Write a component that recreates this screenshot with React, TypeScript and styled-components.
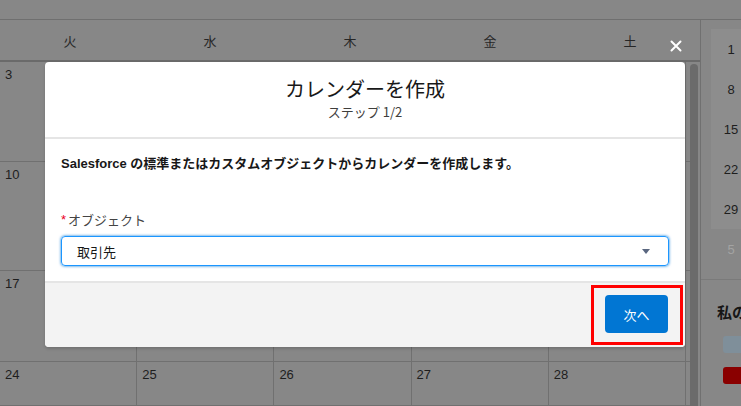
import React from 'react'
import styled, { createGlobalStyle } from 'styled-components'

const GlobalStyle = createGlobalStyle`
  html, body {
    margin: 0;
    padding: 0;
    width: 741px;
    height: 406px;
    overflow: hidden;
    background: #878787;
  }
  * {
    box-sizing: border-box;
  }
`

const Page = styled.div`
  position: relative;
  width: 741px;
  height: 406px;
  overflow: hidden;
  background: #878787;
  color: #1e1e1e;
  font-family: 'Liberation Sans', Arial, 'Noto Sans CJK JP', sans-serif;
  font-size: 13px;
`

const TopBar = styled.div`
  height: 20px;
  border-bottom: 1px solid #6f6f6f;
`

const Main = styled.div`
  display: flex;
  height: 386px;
`

const CalendarPane = styled.div`
  width: 701px;
  border-right: 1px solid #707070;
  display: flex;
  flex-direction: column;
`

const WeekHeader = styled.div`
  display: grid;
  grid-template-columns: repeat(5, 140px);
  height: 42px;
  border-bottom: 2px solid #6a6a6a;
`

const DayName = styled.div`
  display: flex;
  align-items: center;
  justify-content: center;
  color: #262626;
  font-family: 'Noto Sans CJK JP', sans-serif;
  font-size: 13px;
`

const CalendarBody = styled.div`
  flex: 1;
  display: flex;
  min-height: 0;
`

const Grid = styled.div`
  width: 689px;
  display: grid;
  grid-template-columns: repeat(5, 137.2px) 1fr;
  grid-template-rows: 100px 109px 91px 1fr;
`

const DayCell = styled.div<{ $last?: boolean }>`
  border-right: ${(p) => (p.$last ? 'none' : '1px solid #707070')};
  border-bottom: 1px solid #707070;
  padding: 4px 5px;
  line-height: 18px;
  font-size: 13px;
  color: #1e1e1e;
`

const ScrollTrack = styled.div`
  width: 11px;
  padding: 2px 2px 0 1px;
`

const ScrollThumb = styled.div`
  height: 100%;
  border-radius: 5px 5px 0 0;
  background: #6b6b6b;
`

const Sidebar = styled.div`
  flex: 1;
  padding-top: 9px;
  display: flex;
  flex-direction: column;
  overflow: hidden;
`

const MiniMonth = styled.div`
  margin-left: 10px;
  width: 60px;
  background: #8d8d8d;
`

const MiniDay = styled.div<{ $muted?: boolean }>`
  width: 40px;
  height: 40px;
  display: flex;
  align-items: center;
  justify-content: center;
  color: ${(p) => (p.$muted ? '#a3a3a3' : '#1e1e1e')};
  font-size: 13px;
`

const MutedRow = styled.div`
  margin-left: 10px;
`

const SideSection = styled.div`
  margin-top: 10px;
  border-top: 1px solid #7a7a7a;
  padding: 22px 0 0 16px;
`

const SideTitle = styled.div`
  font-family: 'Noto Sans CJK JP', sans-serif;
  font-weight: 700;
  font-size: 15px;
  line-height: 20px;
  white-space: nowrap;
  color: #161616;
`

const Swatch = styled.div<{ $color: string }>`
  margin: 14px 0 0 6px;
  width: 40px;
  height: 17px;
  border-radius: 3px;
  background: ${(p) => p.$color};
`

const Modal = styled.div`
  position: absolute;
  left: 45px;
  top: 62px;
  width: 640px;
  height: 285px;
  display: flex;
  flex-direction: column;
  border-radius: 4px;
  background: #fff;
  box-shadow: 0 2px 3px rgba(0, 0, 0, 0.16);
`

const CloseButton = styled.button`
  position: absolute;
  top: -25px;
  right: 0;
  width: 18px;
  height: 18px;
  padding: 0;
  border: none;
  background: transparent;
  display: flex;
  align-items: center;
  justify-content: center;
`

const ModalHeader = styled.div`
  height: 77px;
  padding-top: 15px;
  border-bottom: 2px solid #e5e5e5;
  text-align: center;
`

const Title = styled.h2`
  margin: 0;
  font-family: 'Noto Sans CJK JP', sans-serif;
  font-weight: 400;
  font-size: 20px;
  line-height: 24px;
  color: #181818;
`

const Subtitle = styled.div`
  margin-top: 2px;
  font-family: 'Noto Sans CJK JP', sans-serif;
  font-size: 13px;
  line-height: 18px;
  color: #3e3e3c;
`

const ModalBody = styled.div`
  height: 142px;
  padding: 16px 16px 0;
`

const Lead = styled.p`
  margin: 0;
  font-weight: 700;
  font-size: 13px;
  line-height: 18px;
  color: #181818;
`

const FieldLabel = styled.label`
  display: flex;
  align-items: center;
  margin-top: 38px;
  font-family: 'Noto Sans CJK JP', sans-serif;
  font-size: 13px;
  line-height: 18px;
  color: #444444;
`

const Required = styled.span`
  color: #ea001e;
  font-family: 'Liberation Sans', sans-serif;
  margin-right: 2px;
`

const SelectBox = styled.div`
  margin-top: 7px;
  height: 30px;
  display: flex;
  align-items: center;
  justify-content: space-between;
  padding: 0 16px 0 15px;
  border: 1px solid #1b96ff;
  border-radius: 4px;
  box-shadow: 0 0 3px #0176d3;
  font-family: 'Noto Sans CJK JP', sans-serif;
  font-size: 13px;
  color: #181818;
`

const Caret = styled.span`
  width: 0;
  height: 0;
  border-left: 4px solid transparent;
  border-right: 4px solid transparent;
  border-top: 5px solid #5a6780;
  margin-right: 2px;
`

const ModalFooter = styled.div`
  flex: 1;
  display: flex;
  justify-content: flex-end;
  align-items: flex-start;
  padding: 2px 2px 0 0;
  background: #f3f3f3;
  border-top: 2px solid #e5e5e5;
  border-radius: 0 0 4px 4px;
`

const Highlight = styled.div`
  border: 3px solid #ff0000;
  padding: 7px 12px 9px 11px;
`

const PrimaryButton = styled.button`
  width: 63px;
  height: 38px;
  border: none;
  border-radius: 4px;
  background: #0176d3;
  color: #fff;
  font-family: 'Noto Sans CJK JP', sans-serif;
  font-size: 13px;
`

const headers = ['火', '水', '木', '金', '土']

const rows = [
  ['3', '', '', '', '', ''],
  ['10', '', '', '', '', ''],
  ['17', '', '', '', '', ''],
  ['24', '25', '26', '27', '28', ''],
]

const App = () => {
  return (
    <Page>
      <GlobalStyle />
      <TopBar />
      <Main>
        <CalendarPane>
          <WeekHeader>
            {headers.map((h) => (
              <DayName key={h}>{h}</DayName>
            ))}
          </WeekHeader>
          <CalendarBody>
            <Grid>
              {rows.map((row, r) =>
                row.map((d, c) => (
                  <DayCell key={`${r}-${c}`} $last={c === 5}>
                    {d}
                  </DayCell>
                )),
              )}
            </Grid>
            <ScrollTrack>
              <ScrollThumb />
            </ScrollTrack>
          </CalendarBody>
        </CalendarPane>

        {/* right side panel */}
        <Sidebar>
          <MiniMonth>
            {['1', '8', '15', '22', '29'].map((d) => (
              <MiniDay key={d}>{d}</MiniDay>
            ))}
          </MiniMonth>
          <MutedRow>
            <MiniDay $muted>5</MiniDay>
          </MutedRow>
          <SideSection>
            <SideTitle>私のカレンダー</SideTitle>
            <Swatch $color="#7f8f9a" />
            <Swatch $color="#8a0000" />
          </SideSection>
        </Sidebar>
      </Main>

      {/* dialog */}
      <Modal>
        <CloseButton aria-label="閉じる">
          <svg width="12" height="12" viewBox="0 0 12 12">
            <path d="M1.5 1.5 L10.5 10.5 M10.5 1.5 L1.5 10.5" stroke="#fff" strokeWidth="2" strokeLinecap="round" />
          </svg>
        </CloseButton>
        <ModalHeader>
          <Title>カレンダーを作成</Title>
          <Subtitle>ステップ 1/2</Subtitle>
        </ModalHeader>
        <ModalBody>
          <Lead>Salesforce の標準またはカスタムオブジェクトからカレンダーを作成します。</Lead>
          <FieldLabel>
            <Required>*</Required>オブジェクト
          </FieldLabel>
          <SelectBox>
            <span>取引先</span>
            <Caret />
          </SelectBox>
        </ModalBody>
        <ModalFooter>
          <Highlight>
            <PrimaryButton>次へ</PrimaryButton>
          </Highlight>
        </ModalFooter>
      </Modal>
    </Page>
  )
}

export default App
